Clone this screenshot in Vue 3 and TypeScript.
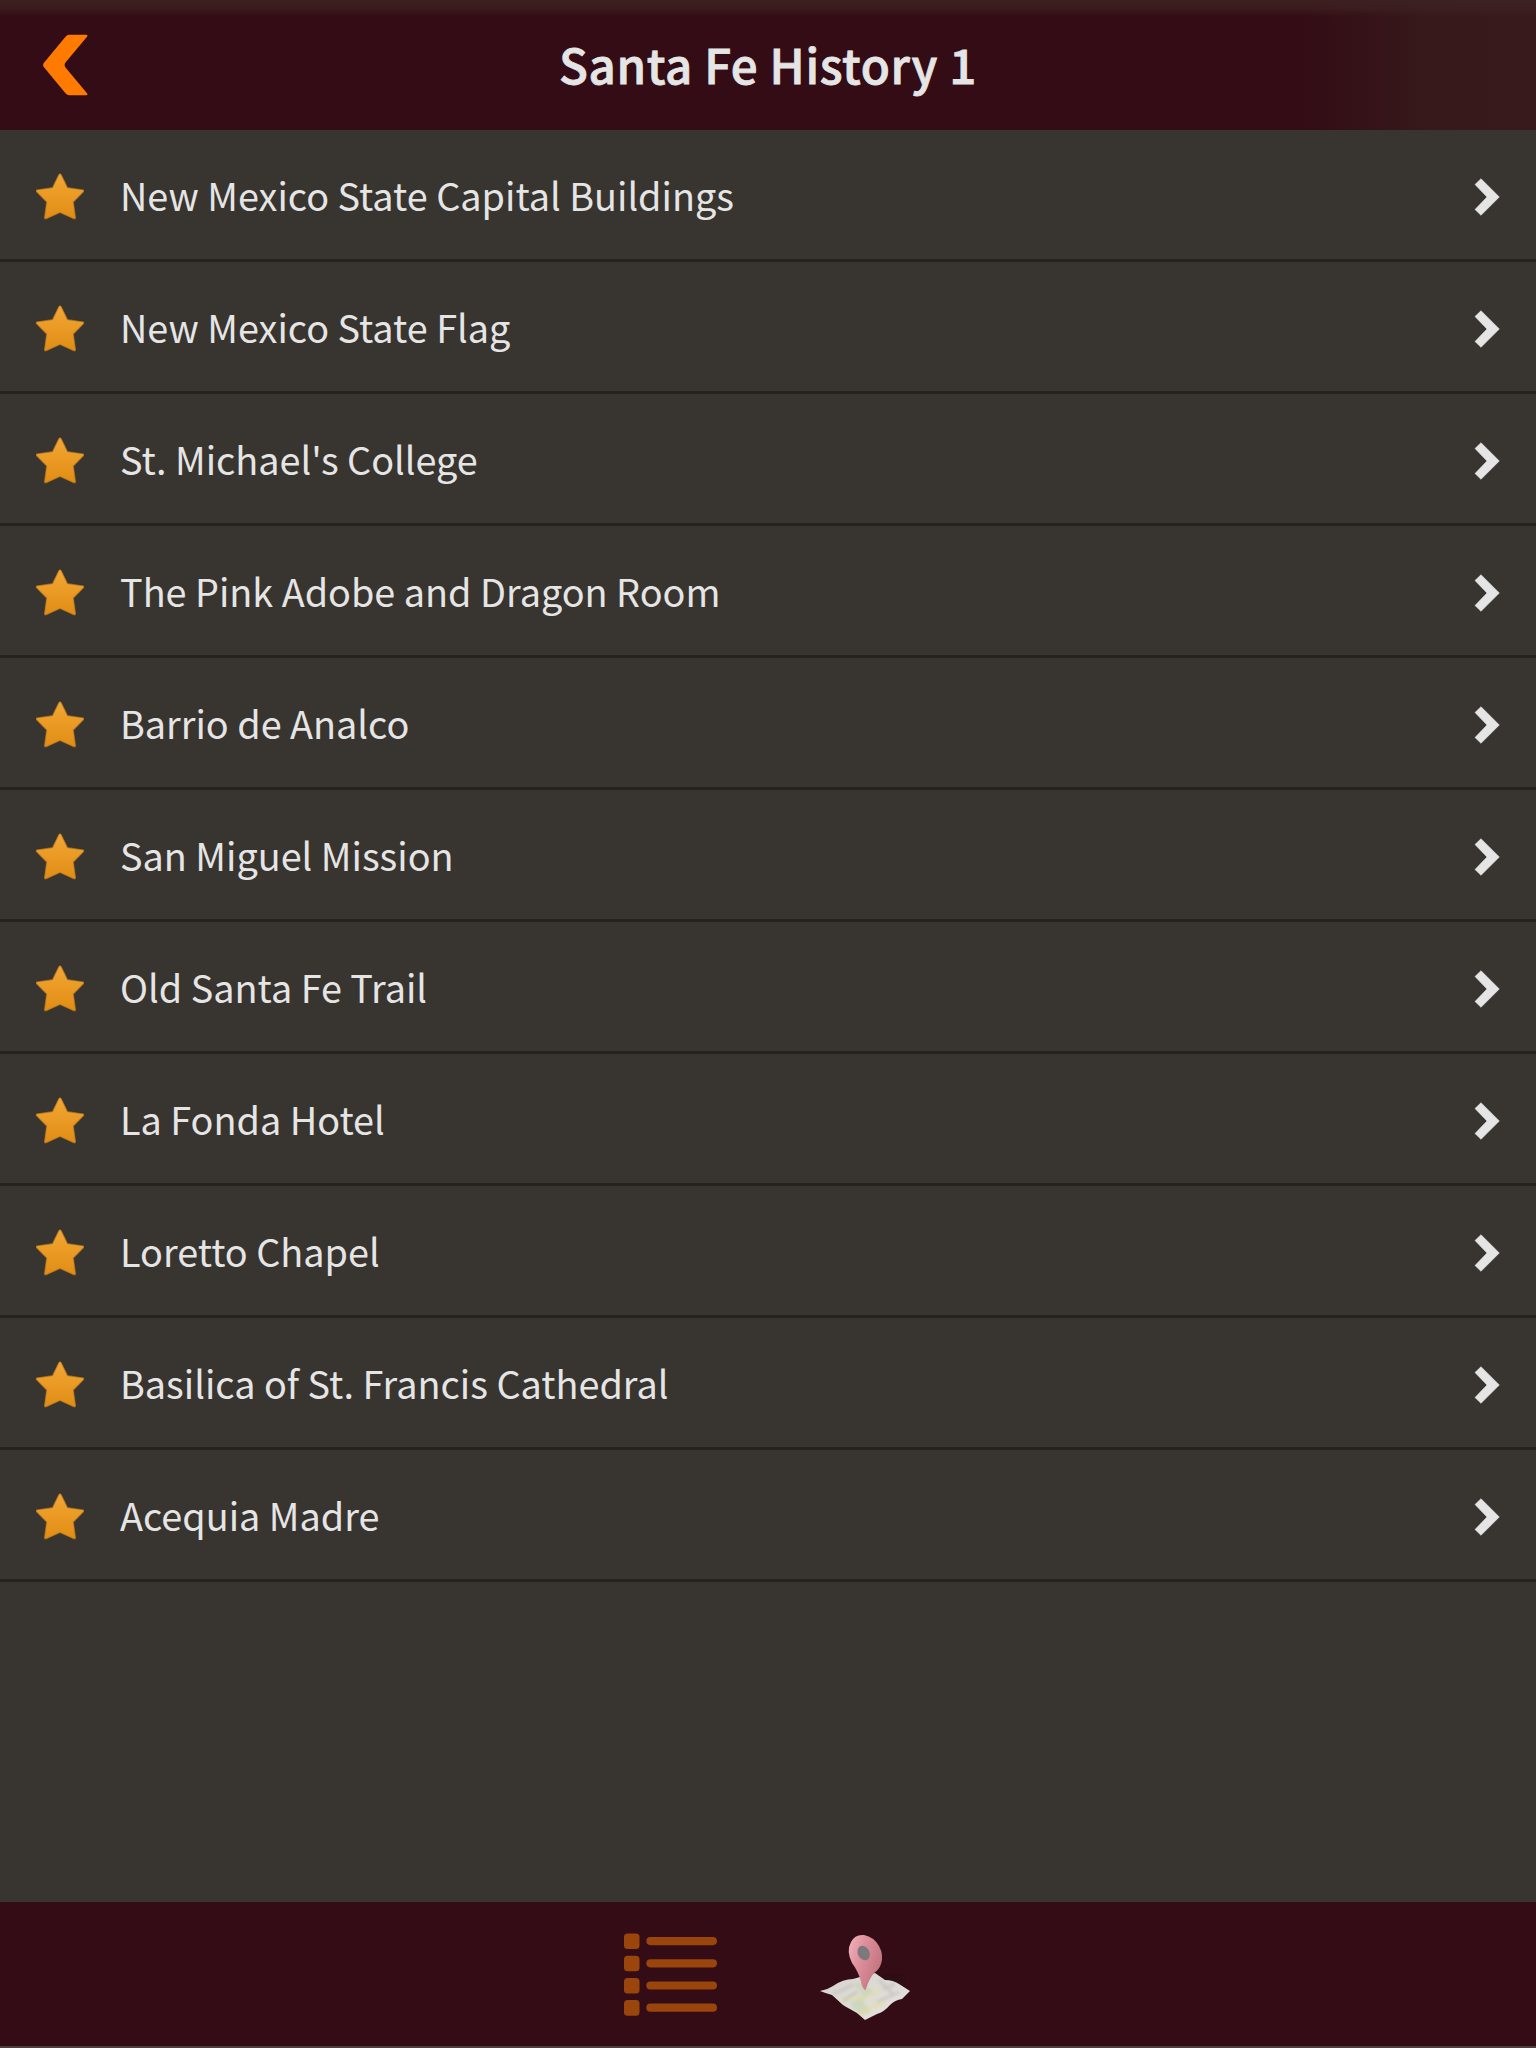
<script setup lang="ts">
const places: string[] = [
  'New Mexico State Capital Buildings',
  'New Mexico State Flag',
  "St. Michael's College",
  'The Pink Adobe and Dragon Room',
  'Barrio de Analco',
  'San Miguel Mission',
  'Old Santa Fe Trail',
  'La Fonda Hotel',
  'Loretto Chapel',
  'Basilica of St. Francis Cathedral',
  'Acequia Madre',
]
const bullets: number[] = [0, 1, 2, 3]
</script>

<template>
  <div class="screen">
    <header class="bar">
      <button class="back" aria-label="Back">
        <svg width="45" height="64" viewBox="0 0 46 64">
          <path d="M26.500 1H44Q46.300 1 45 3L23 29.500Q21.200 32 23 34.500L45 61Q46.300 63 44 63H27Q24.500 63 23 61L0.800 34Q-0.600 32 0.800 30L23 3Q24.500 1 26.500 1Z" fill="#ff7a00" />
        </svg>
      </button>
      <h1>Santa Fe History 1</h1>
      <span class="side"></span>
    </header>

    <ul class="list">
      <li v-for="place in places" :key="place" class="row">
        <svg class="star" width="48" height="47" viewBox="0 0 48 47">
          <defs>
            <linearGradient id="gold" x1="0" y1="0" x2="0" y2="1">
              <stop offset="0" stop-color="#f3a735" />
              <stop offset="1" stop-color="#e08d14" />
            </linearGradient>
          </defs>
          <path d="M24 0.800Q25 0.800 25.800 3L31.500 14.700L47.400 17Q48.400 18 47 19.200L37.300 29L39.500 44.800Q39.300 46.200 37.800 45.700L24 39.500L10.200 45.700Q8.700 46.200 8.500 44.800L10.700 29L1 19.200Q-0.400 18 0.600 17L16.500 14.700L22.200 3Q23 0.800 24 0.800Z" fill="url(#gold)" stroke="#c07d1e" stroke-opacity=".6" stroke-width="1.200" stroke-linejoin="round" />
        </svg>
        <span class="name">{{ place }}</span>
        <svg class="go" width="26" height="38" viewBox="0 0 26 38">
          <path d="M7 0.700L25.300 19L7 37.300L1 31.500L13 19L1 6.500Z" fill="#e5e5e5" stroke="#e5e5e5" stroke-width=".6" stroke-linejoin="round" />
        </svg>
      </li>
    </ul>

    <footer class="tabs">
      <svg width="94" height="84" viewBox="0 0 94 84">
        <g v-for="n in bullets" :key="n" fill="#99450b">
          <rect x="0" :y="0.500 + n * 22.200" width="15.500" height="15.600" rx="3.500" />
          <rect x="22.300" :y="4 + n * 22.200" width="70.700" height="8.200" rx="4.100" />
        </g>
      </svg>
      <svg class="map" width="92" height="88" viewBox="0 0 92 88">
        <defs>
          <linearGradient id="pin" x1="0" y1="0" x2="1" y2=".5">
            <stop offset="0" stop-color="#f0b4bd" />
            <stop offset=".45" stop-color="#dd8f9b" />
            <stop offset="1" stop-color="#c27481" />
          </linearGradient>
          <linearGradient id="paper" x1="0" y1="0" x2="1" y2="1">
            <stop offset="0" stop-color="#d8d3d1" />
            <stop offset=".5" stop-color="#dcdbd5" />
            <stop offset="1" stop-color="#e9e4e2" />
          </linearGradient>
          <clipPath id="sheet">
            <path d="M1 57Q8 56 14 52Q24 45 34 45L48 41L56 39L66 46Q74 46 80 50L91 57L83 65Q76 66 71 71Q65 78 58 80L46 86L38 79Q29 74 24 71L13 61Q6 59 1 57Z" />
          </clipPath>
          <filter id="soft"><feGaussianBlur stdDeviation="1.600" /></filter>
        </defs>
        <ellipse cx="75" cy="44" rx="10" ry="3" fill="#251015" opacity=".6" filter="url(#soft)" />
        <g clip-path="url(#sheet)">
          <rect y="36" width="92" height="52" fill="url(#paper)" />
          <g filter="url(#soft)">
            <path d="M34 50L44 60L31 70L41 82L52 78L44 68L54 57L40 48Z" fill="#c2d2ac" opacity=".55" />
            <path d="M20 68L34 64L46 64L62 55" stroke="#e4e0a0" stroke-width="3" fill="none" opacity=".7" />
            <path d="M40 80L54 72L66 70" stroke="#e4dc88" stroke-width="3" fill="none" opacity=".6" />
            <path d="M14 60L34 51M24 67L38 58M60 46L74 60M64 55L76 50M58 68L80 58" stroke="#b9b5b2" stroke-width="3" fill="none" opacity=".5" />
          </g>
        </g>
        <path d="M46 56Q43 54 41.500 46Q39 37 33 29Q27 17 32 8Q36 0 45 1Q55 3 60 12Q65 21 62 30Q60 36 55 39Q50 45 47 55Q46.500 56.500 46 56Z" fill="url(#pin)" />
        <ellipse cx="44.700" cy="19" rx="5.800" ry="7.600" transform="rotate(-25 44.700 19)" fill="#7d7879" />
      </svg>
    </footer>
    <div class="edge"></div>
  </div>
</template>

<style>
body { background: #38342f; }
</style>

<style scoped>
.screen {
  display: flex;
  flex-direction: column;
  width: 1536px;
  height: 2048px;
  overflow: hidden;
  background: #38342f;
  color: #e5e5e5;
  font-family: "Noto Sans CJK SC", "Noto Sans", sans-serif;
}
.bar {
  display: flex;
  align-items: center;
  height: 130px;
  flex: none;
  background:
    linear-gradient(rgba(62, 36, 36, .8) 0, rgba(62, 34, 34, .7) 8px, rgba(60, 32, 32, 0) 17px),
    linear-gradient(90deg, #330c15 1300px, #37191b 1435px, #391a1c);
}
.back {
  display: flex;
  width: 200px;
  padding: 0 0 0 43px;
  border: 0;
  background: none;
}
.side { width: 200px; }
h1 {
  flex: 1;
  margin: 0;
  padding-bottom: 2px;
  text-align: center;
  font-size: 47.500px;
  line-height: 70px;
  font-weight: 500;
  letter-spacing: .6px;
  -webkit-text-stroke: .8px #e5e5e5;
}
.list { flex: 1; margin: 0; padding: 0; list-style: none; }
.row {
  display: flex;
  align-items: center;
  box-sizing: border-box;
  height: 132px;
  padding: 0 36px;
  border-bottom: 3px solid #27221f;
}
.star { margin-top: 3px; }
.go { margin-top: 4px; }
.name {
  flex: 1;
  margin-left: 36px;
  font-size: 37.800px;
  line-height: 60px;
  white-space: nowrap;
}
.tabs {
  display: flex;
  flex: none;
  height: 144px;
  box-sizing: border-box;
  padding: 31px 0 0 624px;
  background: #330c15;
}
.map { margin: 1px 0 0 101px; }
.edge { height: 2px; flex: none; background: #49423b; }
</style>
